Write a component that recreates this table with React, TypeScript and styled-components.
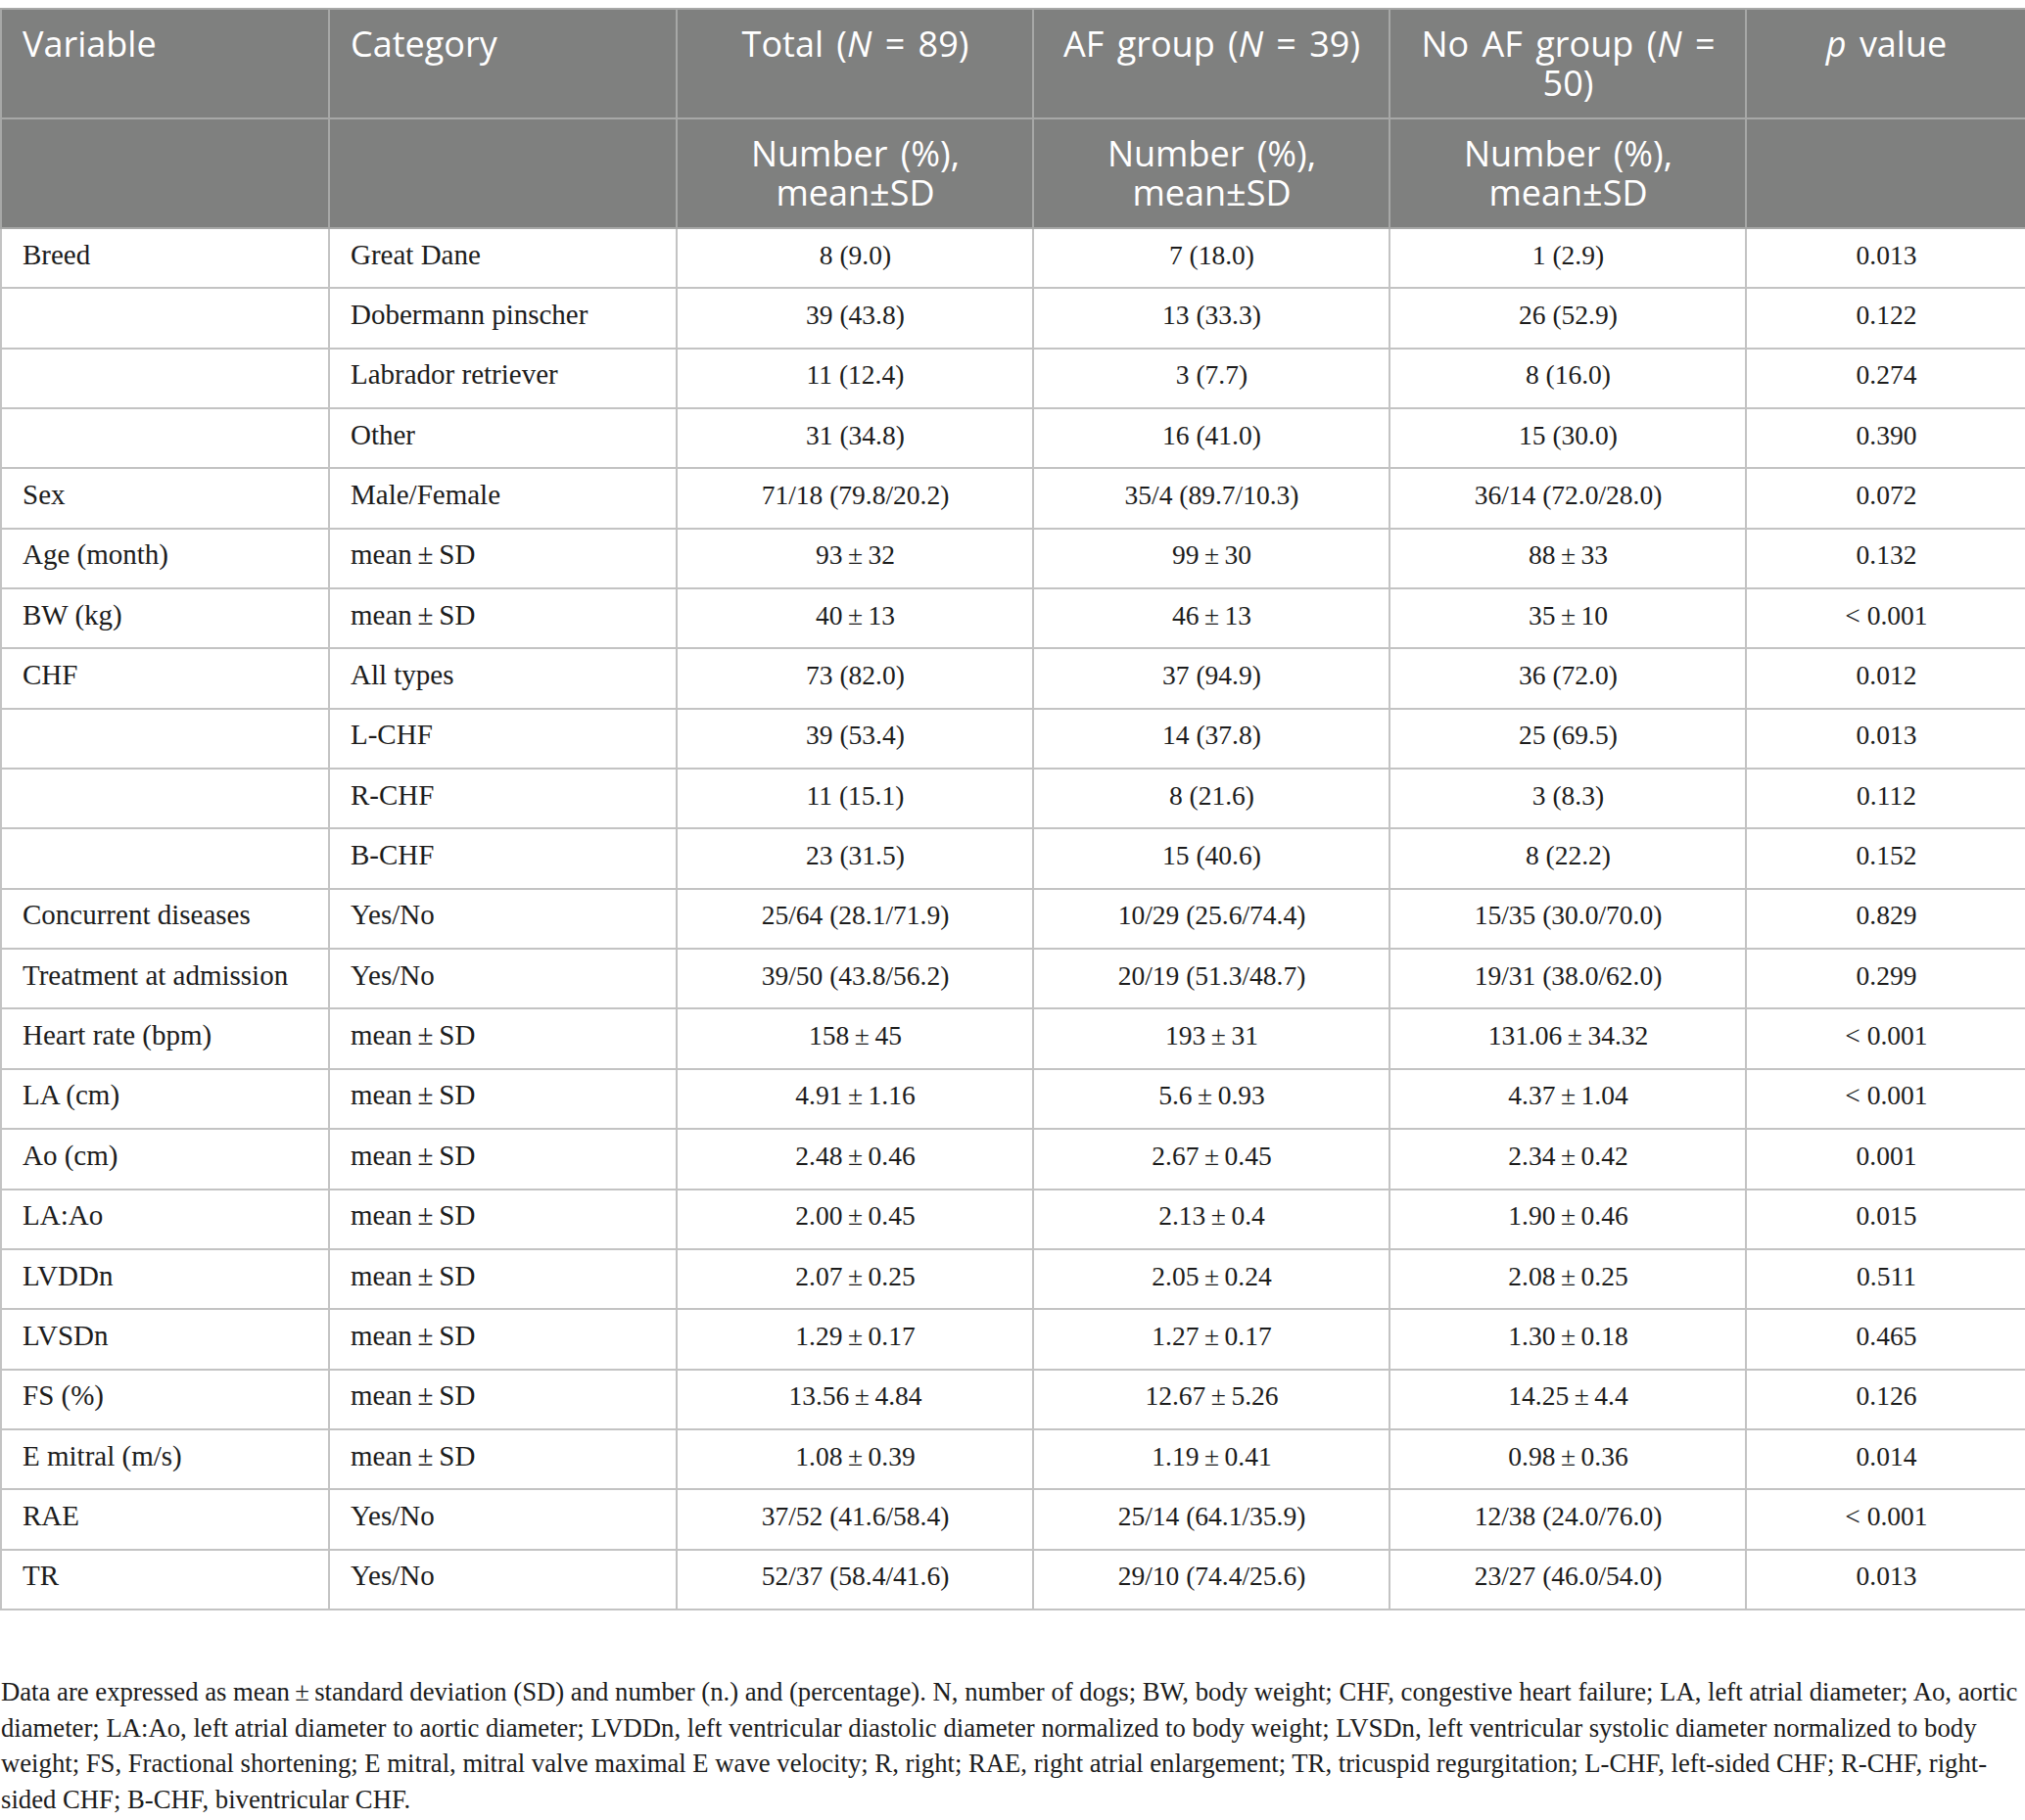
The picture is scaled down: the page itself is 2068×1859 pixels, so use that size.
import React from "react";
import styled, { createGlobalStyle } from "styled-components";

const GlobalStyle = createGlobalStyle`
  html, body {
    margin: 0;
    padding: 0;
    background: #ffffff;
  }
  body {
    font-family: "Liberation Serif", "Times New Roman", serif;
    color: #1c1c1c;
  }
`;

const Page = styled.main`
  width: 2068px;
  padding-top: 8px;
  box-sizing: border-box;
`;

const Table = styled.table`
  width: 2068px;
  table-layout: fixed;
  border-collapse: collapse;
`;

const HeadRow = styled.tr<{ $h: number }>`
  height: ${(p) => p.$h}px;
  background: #7f807f;
`;

const HeadCell = styled.th<{ $align?: "left" | "center" }>`
  font-family: "Open Sans", "Liberation Sans", sans-serif;
  font-weight: 400;
  font-size: 36px;
  line-height: 40px;
  word-spacing: 4px;
  color: #ffffff;
  text-align: ${(p) => p.$align ?? "center"};
  vertical-align: top;
  padding: 15px 20px 15px 21px;
  border: 2px solid #a7a8a7;
`;

const BodyRow = styled.tr`
  height: 61.35px;
`;

const Cell = styled.td<{ $label?: boolean }>`
  font-family: "Liberation Serif", "Times New Roman", serif;
  font-size: ${(p) => (p.$label ? 29 : 27.5)}px;
  line-height: 31px;
  color: #1c1c1c;
  text-align: ${(p) => (p.$label ? "left" : "center")};
  vertical-align: middle;
  padding: 0 20px 7px 21px;
  border: 2px solid #c3c3c3;
  white-space: nowrap;
`;

const Note = styled.p`
  margin: 65px 0 0 1px;
  font-family: "Liberation Serif", "Times New Roman", serif;
  font-size: 26.7px;
  line-height: 36.6px;
  color: #1c1c1c;
  white-space: nowrap;
`;

const Line = styled.span`
  display: block;
`;

const widths = [335, 355, 364, 364, 364, 286];

const PM = "\u2009±\u2009";

const rows: string[][] = [
  ["Breed", "Great Dane", "8 (9.0)", "7 (18.0)", "1 (2.9)", "0.013"],
  ["", "Dobermann pinscher", "39 (43.8)", "13 (33.3)", "26 (52.9)", "0.122"],
  ["", "Labrador retriever", "11 (12.4)", "3 (7.7)", "8 (16.0)", "0.274"],
  ["", "Other", "31 (34.8)", "16 (41.0)", "15 (30.0)", "0.390"],
  ["Sex", "Male/Female", "71/18 (79.8/20.2)", "35/4 (89.7/10.3)", "36/14 (72.0/28.0)", "0.072"],
  ["Age (month)", `mean${PM}SD`, `93${PM}32`, `99${PM}30`, `88${PM}33`, "0.132"],
  ["BW (kg)", `mean${PM}SD`, `40${PM}13`, `46${PM}13`, `35${PM}10`, "< 0.001"],
  ["CHF", "All types", "73 (82.0)", "37 (94.9)", "36 (72.0)", "0.012"],
  ["", "L-CHF", "39 (53.4)", "14 (37.8)", "25 (69.5)", "0.013"],
  ["", "R-CHF", "11 (15.1)", "8 (21.6)", "3 (8.3)", "0.112"],
  ["", "B-CHF", "23 (31.5)", "15 (40.6)", "8 (22.2)", "0.152"],
  ["Concurrent diseases", "Yes/No", "25/64 (28.1/71.9)", "10/29 (25.6/74.4)", "15/35 (30.0/70.0)", "0.829"],
  ["Treatment at admission", "Yes/No", "39/50 (43.8/56.2)", "20/19 (51.3/48.7)", "19/31 (38.0/62.0)", "0.299"],
  ["Heart rate (bpm)", `mean${PM}SD`, `158${PM}45`, `193${PM}31`, `131.06${PM}34.32`, "< 0.001"],
  ["LA (cm)", `mean${PM}SD`, `4.91${PM}1.16`, `5.6${PM}0.93`, `4.37${PM}1.04`, "< 0.001"],
  ["Ao (cm)", `mean${PM}SD`, `2.48${PM}0.46`, `2.67${PM}0.45`, `2.34${PM}0.42`, "0.001"],
  ["LA:Ao", `mean${PM}SD`, `2.00${PM}0.45`, `2.13${PM}0.4`, `1.90${PM}0.46`, "0.015"],
  ["LVDDn", `mean${PM}SD`, `2.07${PM}0.25`, `2.05${PM}0.24`, `2.08${PM}0.25`, "0.511"],
  ["LVSDn", `mean${PM}SD`, `1.29${PM}0.17`, `1.27${PM}0.17`, `1.30${PM}0.18`, "0.465"],
  ["FS (%)", `mean${PM}SD`, `13.56${PM}4.84`, `12.67${PM}5.26`, `14.25${PM}4.4`, "0.126"],
  ["E mitral (m/s)", `mean${PM}SD`, `1.08${PM}0.39`, `1.19${PM}0.41`, `0.98${PM}0.36`, "0.014"],
  ["RAE", "Yes/No", "37/52 (41.6/58.4)", "25/14 (64.1/35.9)", "12/38 (24.0/76.0)", "< 0.001"],
  ["TR", "Yes/No", "52/37 (58.4/41.6)", "29/10 (74.4/25.6)", "23/27 (46.0/54.0)", "0.013"],
];

const noteLines = [
  `Data are expressed as mean${PM}standard deviation (SD) and number (n.) and (percentage). N, number of dogs; BW, body weight; CHF, congestive heart failure; LA, left atrial diameter; Ao, aortic`,
  "diameter; LA:Ao, left atrial diameter to aortic diameter; LVDDn, left ventricular diastolic diameter normalized to body weight; LVSDn, left ventricular systolic diameter normalized to body",
  "weight; FS, Fractional shortening; E mitral, mitral valve maximal E wave velocity; R, right; RAE, right atrial enlargement; TR, tricuspid regurgitation; L-CHF, left-sided CHF; R-CHF, right-",
  "sided CHF; B-CHF, biventricular CHF.",
];

const NumberHead = () => (
  <>
    Number (%),
    <br />
    mean±SD
  </>
);

export default function App() {
  return (
    <Page>
      <GlobalStyle />
      <Table>
        <colgroup>
          {widths.map((w, i) => (
            <col key={i} style={{ width: w }} />
          ))}
        </colgroup>
        <thead>
          <HeadRow $h={110}>
            <HeadCell $align="left">Variable</HeadCell>
            <HeadCell $align="left">Category</HeadCell>
            <HeadCell>
              Total (<i>N</i> = 89)
            </HeadCell>
            <HeadCell>
              AF group (<i>N</i> = 39)
            </HeadCell>
            <HeadCell>
              No AF group (<i>N</i> = 50)
            </HeadCell>
            <HeadCell>
              <i>p</i> value
            </HeadCell>
          </HeadRow>
          <HeadRow $h={111}>
            <HeadCell $align="left" />
            <HeadCell $align="left" />
            <HeadCell>
              <NumberHead />
            </HeadCell>
            <HeadCell>
              <NumberHead />
            </HeadCell>
            <HeadCell>
              <NumberHead />
            </HeadCell>
            <HeadCell />
          </HeadRow>
        </thead>
        <tbody>
          {rows.map((r, i) => (
            <BodyRow key={i}>
              {r.map((c, j) => (
                <Cell key={j} $label={j < 2}>
                  {c}
                </Cell>
              ))}
            </BodyRow>
          ))}
        </tbody>
      </Table>
      <Note>
        {noteLines.map((l, i) => (
          <Line key={i}>{l}</Line>
        ))}
      </Note>
    </Page>
  );
}
